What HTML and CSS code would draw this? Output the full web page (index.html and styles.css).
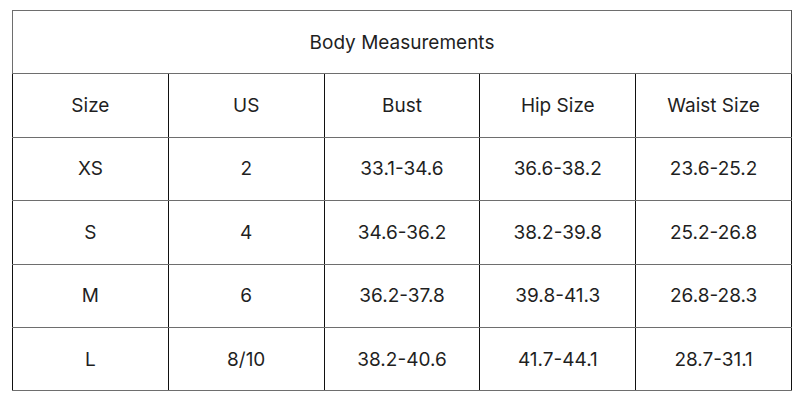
FILE: index.html
```html
<!DOCTYPE html>
<html>
<head>
<meta charset="utf-8">
<link rel="stylesheet" href="styles.css">
</head>
<body>
<table class="sizes">
  <tr><th class="title" colspan="5">Body Measurements</th></tr>
  <tr><td>Size</td><td>US</td><td>Bust</td><td>Hip Size</td><td>Waist Size</td></tr>
  <tr><td>XS</td><td>2</td><td>33.1-34.6</td><td>36.6-38.2</td><td>23.6-25.2</td></tr>
  <tr><td>S</td><td>4</td><td>34.6-36.2</td><td>38.2-39.8</td><td>25.2-26.8</td></tr>
  <tr><td>M</td><td>6</td><td>36.2-37.8</td><td>39.8-41.3</td><td>26.8-28.3</td></tr>
  <tr><td>L</td><td>8/10</td><td>38.2-40.6</td><td>41.7-44.1</td><td>28.7-31.1</td></tr>
</table>
</body>
</html>
```
FILE: styles.css
```css
html, body {
  margin: 0;
  background: #ffffff;
}
body {
  padding: 10px 0 0 12px;
  font-family: "Inter", "Open Sans", sans-serif;
  color: #1f1f1f;
}
.sizes {
  border-collapse: collapse;
  width: 780px;
  table-layout: fixed;
}
.sizes th,
.sizes td {
  height: 62.4px;
  padding: 0;
  text-align: center;
  vertical-align: middle;
  font-size: 19px;
  font-weight: 400;
  border-top: 1.5px solid #6e6e6e;
  border-bottom: 1.5px solid #6e6e6e;
  border-left: 1.5px solid #111111;
  border-right: 1.5px solid #111111;
}
.sizes .title {
  border-left-color: #6e6e6e;
  border-right-color: #555555;
}
```
